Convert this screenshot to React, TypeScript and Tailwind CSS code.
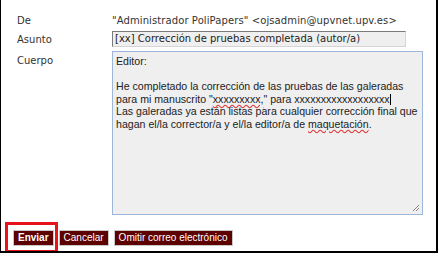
import React from "react";

const F = { fontFamily: '"DejaVu Sans", Verdana, sans-serif' };

export default function App() {
  return (
    <div className="w-[438px] h-[253px] bg-white border-l border-r-2 border-b-2 border-black overflow-hidden relative" style={F}>
      <div className="pt-[13px] pl-[16px] text-[10px] text-[#333]">
        <div className="flex h-[14px] items-center">
          <div className="w-[95px]">De</div>
          <div className="tracking-[0.1px]">"Administrador PoliPapers" &lt;ojsadmin@upvnet.upv.es&gt;</div>
        </div>
        <div className="flex mt-[4px]">
          <div className="w-[95px] pt-[1px]">Asunto</div>
          <div className="w-[294px] h-[16px] bg-[#efefef] border border-t-[#7a7a7a] border-l-[#7a7a7a] border-r-[#d4d4d4] border-b-[#d4d4d4] pl-[2px] leading-[14px] text-[#222]">
            [xx] Corrección de pruebas completada (autor/a)
          </div>
        </div>
        <div className="flex mt-[4px]">
          <div className="w-[95px] pt-[2px]">Cuerpo</div>
          <div
            className="relative w-[311px] h-[164px] bg-[#efefef] border border-[#9db7db] pl-[3px] pt-[3px] leading-[12.5px] text-[10.6px] text-[#222] whitespace-nowrap"
            style={{ fontFamily: '"Liberation Sans", Arial, sans-serif' }}
          >
            <div>Editor:</div>
            <div>&nbsp;</div>
            <div>He completado la corrección de las pruebas de las galeradas</div>
            <div>
              para mi manuscrito "<span className="underline decoration-wavy decoration-[#e03030]">xxxxxxxxx,</span>" para xxxxxxxxxxxxxxxxxx<span className="inline-block w-px h-[11px] bg-black align-middle" />
            </div>
            <div>Las galeradas ya están listas para cualquier corrección final que</div>
            <div>
              hagan el/la corrector/a y el/la editor/a de <span className="underline decoration-wavy decoration-[#e03030]">maquetación</span>.
            </div>
            <svg className="absolute right-[2px] bottom-[2px]" width="8" height="8" viewBox="0 0 8 8">
              <path d="M7 1 L1 7 M7 4 L4 7" stroke="#888" strokeWidth="1" />
            </svg>
          </div>
        </div>
      </div>
      <div className="flex gap-[5px] pl-[12px] mt-[15px]" style={{ fontFamily: '"Liberation Sans", Arial, sans-serif' }}>
        <button className="h-[16px] px-[4px] bg-[#5c0000] text-white text-[10px] font-bold leading-none border border-[#c8c8c8]">Enviar</button>
        <button className="h-[16px] px-[4px] bg-[#5c0000] text-white text-[10px] leading-none border border-[#c8c8c8]">Cancelar</button>
        <button className="h-[16px] px-[4px] bg-[#5c0000] text-white text-[10px] leading-none border border-[#c8c8c8]">Omitir correo electrónico</button>
      </div>
      <div className="absolute left-[4px] top-[222px] w-[53px] h-[31px] border-[3px] border-[#e8141c]" />
    </div>
  );
}
